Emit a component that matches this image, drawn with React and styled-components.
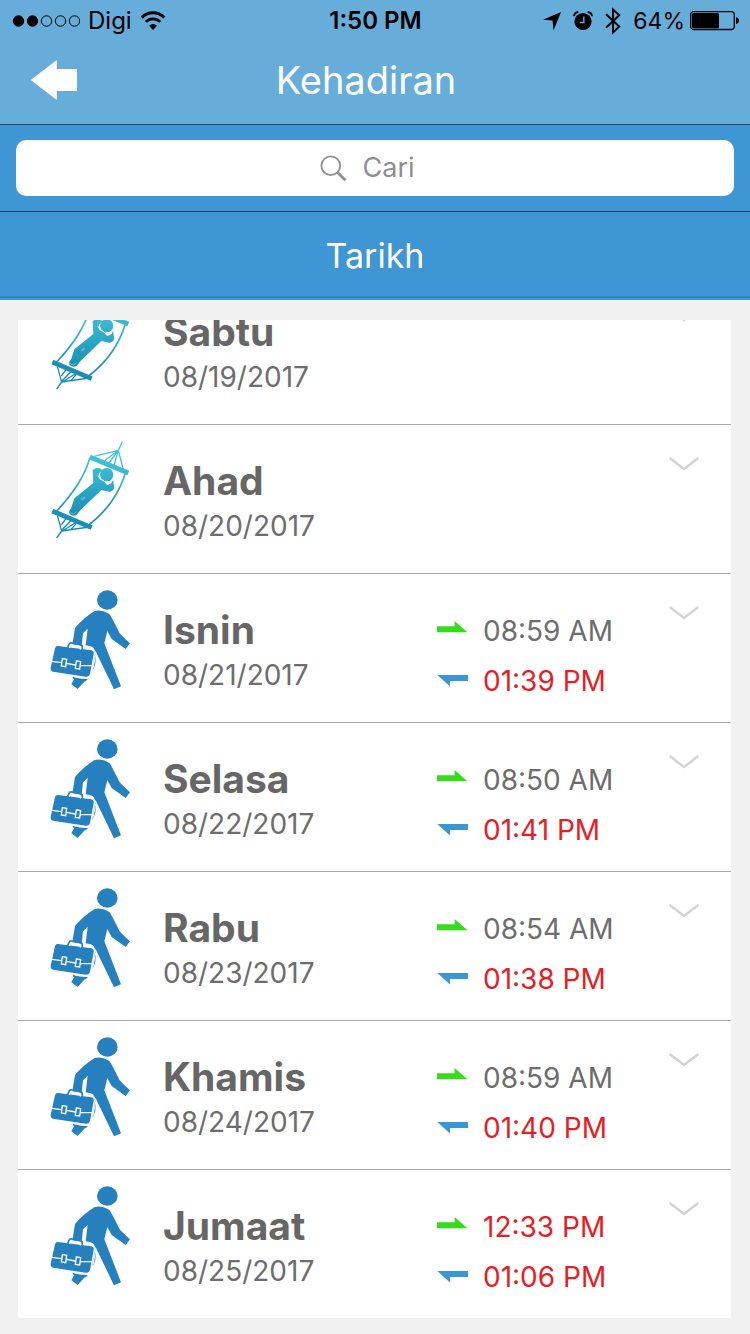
import React, { useLayoutEffect, useRef } from "react";
import styled, { createGlobalStyle } from "styled-components";

const GlobalStyle = createGlobalStyle`
  * { box-sizing: border-box; }
  body {
    margin: 0;
    background: #f1f1f1;
    font-family: Inter, "Liberation Sans", sans-serif;
  }
  button { border: 0; padding: 0; background: none; font: inherit; }
  svg { display: block; }
`;

const Screen = styled.div`
  display: flex;
  flex-direction: column;
  height: 100vh;
  padding-bottom: 16px;
  background: #f1f1f1;
`;

const TopBar = styled.header`
  background: #67adda;
  border-bottom: 1px solid #25475f;
`;

const StatusBar = styled.div`
  display: grid;
  grid-template-columns: 1fr auto 1fr;
  align-items: center;
  height: 42px;
  padding: 0 11px 0 12px;
  font-size: 24px;
  line-height: 42px;
  color: #000;
`;

const StatusGroup = styled.div`
  display: flex;
  align-items: center;
  justify-content: ${(p) => (p.$end ? "flex-end" : "flex-start")};
  gap: ${(p) => (p.$end ? "12px" : "8px")};
`;

const Charge = styled.span`
  display: flex;
  align-items: center;
  gap: 5px;
  font-size: 23px;
`;

const Clock = styled.time`
  font-weight: 600;
`;

const NavBar = styled.div`
  display: grid;
  grid-template-columns: 1fr auto 1fr;
  align-items: center;
  height: 82px;
  padding: 0 48px 6px 30px;
`;

const BackButton = styled.button`
  justify-self: start;
`;

const Title = styled.h1`
  margin: 0;
  font-size: 38px;
  font-weight: 400;
  line-height: 48px;
  color: #fff;
`;

const SearchBar = styled.form`
  padding: 15px 16px;
  background: #3e96d4;
  border-bottom: 1px solid #1f4564;
`;

const SearchField = styled.label`
  display: flex;
  align-items: center;
  justify-content: center;
  gap: 16px;
  height: 56px;
  padding-right: 16px;
  border-radius: 10px;
  background: #fff;
  color: #8e8e93;
`;

const SearchInput = styled.input`
  width: 52px;
  field-sizing: content;
  padding: 0 0 2px;
  border: 0;
  outline: 0;
  background: none;
  font: inherit;
  font-size: 27px;
  line-height: 32px;
  &::placeholder { color: #8e8e93; opacity: 1; }
`;

const SectionHeader = styled.h2`
  display: flex;
  align-items: center;
  justify-content: center;
  height: 88px;
  margin: 0 0 20px;
  background: linear-gradient(#3782cc, #3782cc) 0 84px / 100% 2px no-repeat #3e96d4;
  font-size: 34px;
  font-weight: 400;
  line-height: 44px;
  color: #fff;
`;

const DayList = styled.ul`
  flex: 1;
  min-height: 0;
  margin: 0 19px 0 18px;
  padding: 0;
  overflow-y: auto;
  scrollbar-width: none;
  list-style: none;
  background: #fff;
`;

const DayRow = styled.li`
  display: flex;
  align-items: flex-start;
  min-height: 149px;
  padding: 6px 32px 16px 22px;
  border-bottom: 1px solid #a9a9ab;
  &:last-child {
    min-height: 148px;
    border-bottom: 0;
  }
`;

const DayText = styled.div`
  flex: 1;
  padding: 26px 0 0 23px;
`;

const DayName = styled.h3`
  margin: 0;
  font-size: 39px;
  font-weight: 700;
  line-height: 48px;
  color: #666;
`;

const DayDate = styled.time`
  display: block;
  font-size: 28px;
  line-height: 42px;
  color: #6d6d6d;
`;

const Punches = styled.div`
  width: 232px;
  padding-top: 26px;
`;

const Punch = styled.div`
  display: flex;
  align-items: center;
  gap: 15px;
  height: 50px;
  font-size: 28px;
  line-height: 50px;
  white-space: nowrap;
  color: ${(p) => (p.$alert ? "#e71d25" : "#6d6d6d")};
`;

const ExpandButton = styled.button`
  margin-top: 26px;
`;

const SignalDots = () => (
  <svg width="68" height="12" viewBox="0 0 68 12" aria-label="Signal">
    {[0, 1, 2, 3, 4].map((i) => (
      <circle key={i} cx={6.5 + i * 14} cy="6" r="5.2" fill={i < 2 ? "#000" : "none"} stroke="#000" strokeWidth="1" />
    ))}
  </svg>
);

const WifiIcon = () => (
  <svg width="26" height="20" viewBox="0 0 26 20" fill="none" stroke="#000">
    <path d="M1.7 6.6a15.8 15.8 0 0 1 22.6 0" strokeWidth="3" />
    <path d="M5.8 10.9a10 10 0 0 1 14.4 0" strokeWidth="2.7" />
    <path d="M13 19l-4-4.2q4-3.7 8 0z" fill="#000" stroke="none" />
  </svg>
);

const LocationIcon = () => (
  <svg width="18" height="19" viewBox="0 0 18 19">
    <path d="M18 0L10.5 18.5L9.6 8.6L0 7.7Z" />
  </svg>
);

const AlarmIcon = () => (
  <svg width="20" height="20" viewBox="0 0 20 20">
    <circle cx="10" cy="10.5" r="8.6" />
    <path d="M10.8 5.5v6H6.8" fill="none" stroke="#67adda" strokeWidth="1.4" />
    <path d="M1 5.3Q1.2 1.6 5.3 1M14.7 1Q18.8 1.6 19 5.3" fill="none" stroke="#000" strokeWidth="1.8" />
  </svg>
);

const BluetoothIcon = () => (
  <svg width="16" height="28" viewBox="0 0 16 28" fill="none" stroke="#000" strokeWidth="2">
    <path d="M1 7.3L14.2 19.6L8 25.5V2.5L14.2 8.3L1 20.7" />
  </svg>
);

const BatteryIcon = () => (
  <svg width="49" height="20" viewBox="0 0 49 20">
    <rect x=".7" y=".7" width="43.6" height="17.8" rx="3" fill="none" stroke="#000" strokeWidth="1.3" />
    <rect x="2" y="2" width="27" height="15.2" rx="1.5" />
    <path d="M46 6.3q3 .5 3 3.3t-3 3.3z" />
  </svg>
);

const BackIcon = () => (
  <svg width="48" height="40" viewBox="0 0 48 40">
    <path d="M.7 20L26.8 0V9H47V31H26.8V40Z" fill="#fff" />
  </svg>
);

const SearchIcon = () => (
  <svg width="27" height="27" viewBox="0 0 27 27" fill="none" stroke="#8e8e93">
    <circle cx="10.8" cy="10.8" r="9.4" strokeWidth="1.8" />
    <path d="M17.6 17.6L25.5 25.2" strokeWidth="2.8" />
  </svg>
);

const InIcon = () => (
  <svg width="31" height="20" viewBox="0 0 31 20">
    <path d="M0 5.2H17.6V0L30.5 11.2H0Z" fill="#36dc1c" />
  </svg>
);

const OutIcon = () => (
  <svg width="31" height="12" viewBox="0 0 31 12">
    <path d="M.3 0H31V6H13V11.4Z" fill="#3b96d5" />
  </svg>
);

const ChevronIcon = () => (
  <svg width="30" height="14" viewBox="0 0 30 14">
    <path d="M.7 1L15 12L29.3 1" fill="none" stroke="#d3d3d6" strokeWidth="2.4" />
  </svg>
);

const WorkIcon = () => (
  <svg width="100" height="120" viewBox="0 0 300 360" fill="#2680bd">
    <ellipse cx="202" cy="60" rx="31" ry="29" />
    <path d="M164 93Q184 88 208 102Q213 107 238 158Q246 168 270 190L257 207L215 177L202 153L193 190L243 319L222 328L168 216L166 250Q162 268 156 274L163 238Q170 202 152 199L137 196L143 146L129 160L125 197L97 193L105 144Q132 112 164 93Z" />
    <path d="M104 294L137 301L113 327L94 313Z" />
    <path d="M97 290Q126 299 144 297L137 304L100 296Z" />
    <path d="M54 198L154 211Q163 213 161 222L150 282Q147 292 137 290L39 275Q31 272 32 263L45 205Q47 197 54 198Z" />
    <path d="M82 203L87 194Q88 188 96 189L119 193Q128 195 127 202V208" fill="none" stroke="#2680bd" strokeWidth="5" />
    <path d="M88 204L91 196L121 200V209" fill="none" stroke="#fff" strokeWidth="3" />
    <path d="M36 244L64 248M79 250L106 255M121 257L157 257" fill="none" stroke="#fff" strokeWidth="4" />
    <path d="M67 236L80 238L77 260L64 258ZM109 243L122 245L119 267L106 265Z" fill="none" stroke="#fff" strokeWidth="4" />
    <path d="M160 209Q170 214 167 224L155 286Q152 294 141 294L103 290" fill="none" stroke="#fff" strokeWidth="3" />
  </svg>
);

const RestIcon = ({ id }) => (
  <svg width="100" height="120" viewBox="0 -12 300 360" fill="none">
    <defs>
      <linearGradient id={id} gradientUnits="userSpaceOnUse" x1="0" y1="20" x2="0" y2="310">
        <stop offset="0" stopColor="#45cbe0" />
        <stop offset=".28" stopColor="#3bbad4" />
        <stop offset=".75" stopColor="#1b8fb5" />
        <stop offset="1" stopColor="#168db2" />
      </linearGradient>
    </defs>
    <g stroke={`url(#${id})`}>
      <path d="M149 66L265 114M37 228L155 278" strokeWidth="14" />
      <path d="M149 70Q128 146 50 228M257 112Q228 208 146 270" strokeWidth="5" />
      <path d="M247 20L235 46L159 65M235 46L250 104M235 46L193 78M235 46L207 84M235 46L222 91" strokeWidth="4" />
      <path d="M50 309L65 288L52 241M65 288L147 276M64 270L80 248M65 286L95 255M67 288L110 261M93 283L109 265" strokeWidth="4" />
    </g>
    <g fill={`url(#${id})`}>
      <path d="M158 106Q165 97 180 100L187 106L176 116L179 129L189 137L204 149L214 145L219 134L223 159Q220 168 208 170L184 165L121 226L110 239Q99 246 89 237Q85 226 93 221L103 190L160 144Z" />
      <circle cx="200" cy="119" r="20" />
    </g>
    <path d="M174 121L181 133L190 136L202 149M202 149V139" stroke="#fff" strokeWidth="3" />
    <path d="M91 233L101 237L109 230M123 192L135 186M125 195L134 190" stroke="#fff" strokeWidth="1" />
  </svg>
);

const days = [
  { name: "Sabtu", date: "08/19/2017" },
  { name: "Ahad", date: "08/20/2017" },
  { name: "Isnin", date: "08/21/2017", in: "08:59 AM", out: "01:39 PM" },
  { name: "Selasa", date: "08/22/2017", in: "08:50 AM", out: "01:41 PM" },
  { name: "Rabu", date: "08/23/2017", in: "08:54 AM", out: "01:38 PM" },
  { name: "Khamis", date: "08/24/2017", in: "08:59 AM", out: "01:40 PM" },
  { name: "Jumaat", date: "08/25/2017", in: "12:33 PM", out: "01:06 PM", late: true },
];

function Day({ day }) {
  return (
    <DayRow>
      {day.in ? <WorkIcon /> : <RestIcon id={`rest-${day.name}`} />}
      <DayText>
        <DayName>{day.name}</DayName>
        <DayDate>{day.date}</DayDate>
      </DayText>
      {day.in && (
        <Punches>
          <Punch $alert={day.late}><InIcon />{day.in}</Punch>
          <Punch $alert><OutIcon />{day.out}</Punch>
        </Punches>
      )}
      <ExpandButton type="button" aria-label={`Expand ${day.name}`}>
        <ChevronIcon />
      </ExpandButton>
    </DayRow>
  );
}

export default function App() {
  const list = useRef(null);

  // Open on the most recent day, at the end of the list.
  useLayoutEffect(() => {
    list.current.scrollTop = list.current.scrollHeight;
  }, []);

  return (
    <Screen>
      <GlobalStyle />
      <TopBar>
        <StatusBar>
          <StatusGroup>
            <SignalDots />
            <span>Digi</span>
            <WifiIcon />
          </StatusGroup>
          <Clock>1:50 PM</Clock>
          <StatusGroup $end>
            <LocationIcon />
            <AlarmIcon />
            <BluetoothIcon />
            <Charge>64%<BatteryIcon /></Charge>
          </StatusGroup>
        </StatusBar>
        <NavBar>
          <BackButton type="button" aria-label="Back"><BackIcon /></BackButton>
          <Title>Kehadiran</Title>
        </NavBar>
      </TopBar>
      <SearchBar onSubmit={(e) => e.preventDefault()}>
        <SearchField>
          <SearchIcon />
          <SearchInput type="text" placeholder="Cari" aria-label="Cari" />
        </SearchField>
      </SearchBar>
      <SectionHeader>Tarikh</SectionHeader>
      <DayList ref={list}>
        {days.map((day) => <Day key={day.date} day={day} />)}
      </DayList>
    </Screen>
  );
}
